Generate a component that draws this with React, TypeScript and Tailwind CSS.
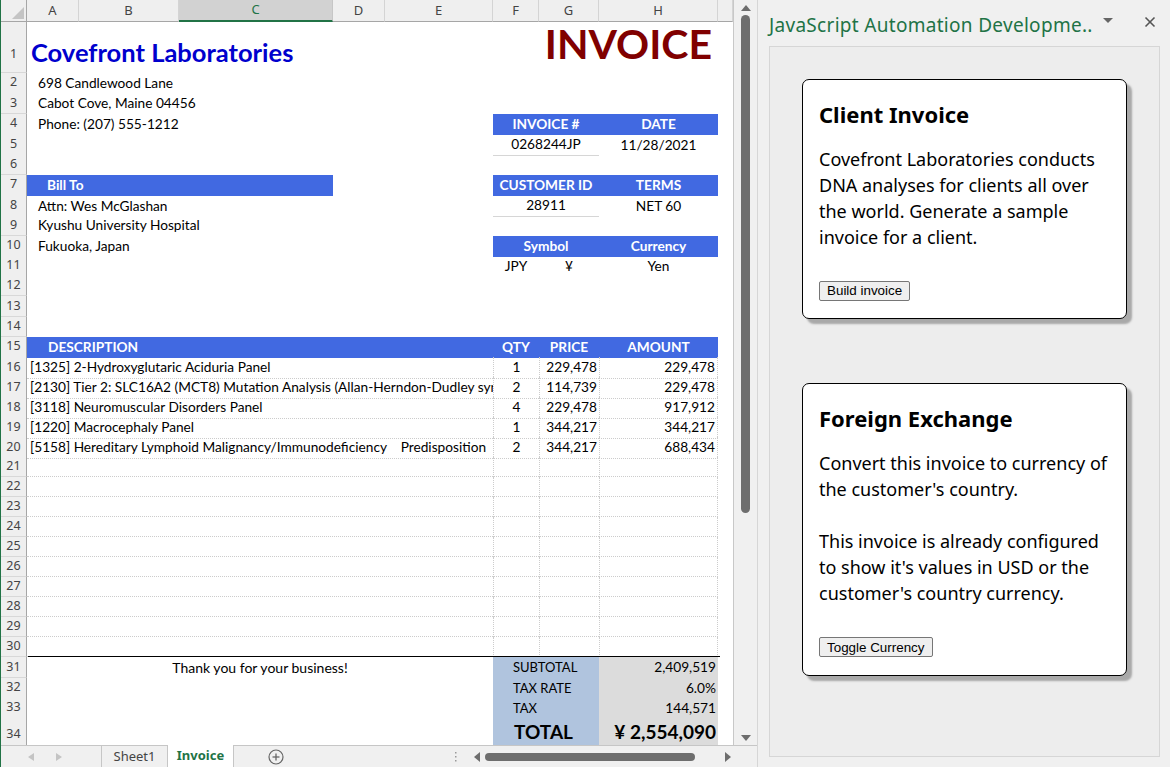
import React from "react";

const GRID =
  "grid grid-cols-[26px_52px_100px_154px_52px_108px_46px_60px_119px_15px]";
const XL = { fontFamily: "Lato, 'Noto Sans', sans-serif" } as React.CSSProperties;

function RH({ n, cls = "items-center" }: { n: number | string; cls?: string }) {
  return (
    <div
      className={`col-start-1 flex justify-center ${cls} bg-[#efefef] border-r border-[#a6a6a6] border-b border-b-[#d8d8d8] text-[12.5px] text-[#444]`}
      style={{ fontFamily: "'Noto Sans', sans-serif" }}
    >
      {n}
    </div>
  );
}

function Row({
  h,
  n,
  children,
  rhCls,
}: {
  h: string;
  n: number;
  children?: React.ReactNode;
  rhCls?: string;
}) {
  return (
    <div className={`${GRID} ${h} text-[13.7px] text-black`} style={XL}>
      <RH n={n} cls={rhCls} />
      {children}
    </div>
  );
}

const items: [string, string, string, string][] = [
  ["[1325] 2-Hydroxyglutaric Aciduria Panel", "1", "229,478", "229,478"],
  [
    "[2130] Tier 2: SLC16A2 (MCT8) Mutation Analysis (Allan-Herndon-Dudley syndrome)",
    "2",
    "114,739",
    "229,478",
  ],
  ["[3118] Neuromuscular Disorders Panel", "4", "229,478", "917,912"],
  ["[1220] Macrocephaly Panel", "1", "344,217", "344,217"],
  [
    "[5158] Hereditary Lymphoid Malignancy/Immunodeficiency    Predisposition",
    "2",
    "344,217",
    "688,434",
  ],
];

function ItemRow({ n, it }: { n: number; it?: [string, string, string, string] }) {
  const dot = "border-b border-dotted border-[#cccccc]";
  return (
    <Row h="h-[20px]" n={n}>
      <div
        className={`col-start-2 col-span-5 ${dot} flex items-center pl-[3px] overflow-hidden whitespace-pre`}
      >
        {it ? it[0] : ""}
      </div>
      <div className={`col-start-7 ${dot} border-l flex items-center justify-center`}>
        {it ? it[1] : ""}
      </div>
      <div className={`col-start-8 ${dot} border-l flex items-center justify-end pr-[2px]`}>
        {it ? it[2] : ""}
      </div>
      <div
        className={`col-start-9 ${dot} border-l border-r flex items-center justify-end pr-[2px]`}
      >
        {it ? it[3] : ""}
      </div>
    </Row>
  );
}

function ColHeader() {
  const cols = ["A", "B", "C", "D", "E", "F", "G", "H", ""];
  return (
    <div
      className={`${GRID} h-[20px] text-[13px] text-[#444]`}
      style={{ fontFamily: "'Noto Sans', sans-serif" }}
    >
      <div className="relative bg-[#efefef] border-r border-b border-[#a6a6a6]">
        <svg className="absolute right-[2px] bottom-[2px]" width="12" height="12">
          <polygon points="12,0 12,12 0,12" fill="#c4c4c4" />
        </svg>
      </div>
      {cols.map((c, i) =>
        c === "C" ? (
          <div
            key={i}
            className="bg-[#d2d2d2] border-r border-[#c6c6c6] border-b-2 border-b-[#217346] flex items-center justify-center text-[#217346]"
          >
            {c}
          </div>
        ) : (
          <div
            key={i}
            className="bg-[#efefef] border-r border-[#d4d4d4] border-b border-b-[#a6a6a6] flex items-center justify-center"
          >
            {c}
          </div>
        )
      )}
    </div>
  );
}

function Sheet() {
  const blue = "bg-[#4169e1] text-white font-bold";
  return (
    <div className="w-[733px] bg-white overflow-hidden">
      <ColHeader />
      <Row h="h-[53px]" n={1} rhCls="items-end pb-[8px]">
        <div className="col-start-2 col-span-4 flex items-end pb-[8px] pl-[4px] text-[25.5px] leading-none font-bold text-[#0000cd] whitespace-nowrap">
          Covefront Laboratories
        </div>
        <div className="col-start-7 col-span-3 flex items-end justify-end pr-[6px] pb-[9px] text-[41px] font-bold text-[#800000] leading-none">
          INVOICE
        </div>
      </Row>
      <Row h="h-[20px]" n={2}>
        <div className="col-start-2 col-span-3 flex items-center pl-[11px] whitespace-nowrap">
          698 Candlewood Lane
        </div>
      </Row>
      <Row h="h-[21px]" n={3}>
        <div className="col-start-2 col-span-3 flex items-center pl-[11px] whitespace-nowrap">
          Cabot Cove, Maine 04456
        </div>
      </Row>
      <Row h="h-[20px]" n={4}>
        <div className="col-start-2 col-span-3 flex items-center pl-[11px] whitespace-nowrap">
          Phone: (207) 555-1212
        </div>
        <div className={`col-start-7 col-span-2 ${blue} flex items-center justify-center`}>
          INVOICE #
        </div>
        <div className={`col-start-9 ${blue} flex items-center justify-center`}>DATE</div>
      </Row>
      <Row h="h-[20px]" n={5}>
        <div className="col-start-7 col-span-2 flex items-center justify-center border-b border-[#d6d6d6]">
          0268244JP
        </div>
        <div className="col-start-9 flex items-center justify-center">11/28/2021</div>
      </Row>
      <Row h="h-[21px]" n={6} />
      <Row h="h-[20px]" n={7}>
        <div className={`col-start-2 col-span-3 ${blue} flex items-center pl-[20px]`}>Bill To</div>
        <div className={`col-start-7 col-span-2 ${blue} flex items-center justify-center`}>
          CUSTOMER ID
        </div>
        <div className={`col-start-9 ${blue} flex items-center justify-center`}>TERMS</div>
      </Row>
      <Row h="h-[20px]" n={8}>
        <div className="col-start-2 col-span-3 flex items-center pl-[11px] whitespace-nowrap">
          Attn: Wes McGlashan
        </div>
        <div className="col-start-7 col-span-2 flex items-center justify-center border-b border-[#d6d6d6]">
          28911
        </div>
        <div className="col-start-9 flex items-center justify-center">NET 60</div>
      </Row>
      <Row h="h-[21px]" n={9}>
        <div className="col-start-2 col-span-3 flex items-center pl-[11px] whitespace-nowrap">
          Kyushu University Hospital
        </div>
      </Row>
      <Row h="h-[20px]" n={10}>
        <div className="col-start-2 col-span-3 flex items-center pl-[11px] whitespace-nowrap">
          Fukuoka, Japan
        </div>
        <div className={`col-start-7 col-span-2 ${blue} flex items-center justify-center`}>
          Symbol
        </div>
        <div className={`col-start-9 ${blue} flex items-center justify-center`}>Currency</div>
      </Row>
      <Row h="h-[20px]" n={11}>
        <div className="col-start-7 flex items-center justify-center">JPY</div>
        <div className="col-start-8 flex items-center justify-center">¥</div>
        <div className="col-start-9 flex items-center justify-center">Yen</div>
      </Row>
      <Row h="h-[20px]" n={12} />
      <Row h="h-[21px]" n={13} />
      <Row h="h-[20px]" n={14} />
      <Row h="h-[20px]" n={15}>
        <div className={`col-start-2 col-span-5 ${blue} flex items-center pl-[21px]`}>
          DESCRIPTION
        </div>
        <div className={`col-start-7 ${blue} flex items-center justify-center`}>QTY</div>
        <div className={`col-start-8 ${blue} flex items-center justify-center`}>PRICE</div>
        <div className={`col-start-9 ${blue} flex items-center justify-center`}>AMOUNT</div>
      </Row>
      {Array.from({ length: 15 }).map((_, i) => (
        <ItemRow key={i} n={16 + i} it={items[i]} />
      ))}
      <div className="relative">
        <div className="absolute left-[27px] top-[-1px] w-[692px] h-[1px] bg-black" />
      </div>
      <Row h="h-[21px]" n={31}>
        <div className="col-start-2 col-span-5 flex items-center justify-center text-[14px]">
          Thank you for your business!
        </div>
        <div className="col-start-7 col-span-2 bg-[#b0c4de] flex items-center pl-[20px] text-[13px]">
          SUBTOTAL
        </div>
        <div className="col-start-9 bg-[#dcdcdc] flex items-center justify-end pr-[2px]">
          2,409,519
        </div>
      </Row>
      <Row h="h-[20px]" n={32}>
        <div className="col-start-7 col-span-2 bg-[#b0c4de] flex items-center pl-[20px] text-[13px]">
          TAX RATE
        </div>
        <div className="col-start-9 bg-[#dcdcdc] flex items-center justify-end pr-[2px]">6.0%</div>
      </Row>
      <Row h="h-[20px]" n={33}>
        <div className="col-start-7 col-span-2 bg-[#b0c4de] flex items-center pl-[20px] text-[13px]">
          TAX
        </div>
        <div className="col-start-9 bg-[#dcdcdc] flex items-center justify-end pr-[2px]">
          144,571
        </div>
      </Row>
      <Row h="h-[28px]" n={34} rhCls="items-center pt-[3px]">
        <div className="col-start-7 col-span-2 bg-[#b0c4de] flex items-end pb-[2px] pl-[21px] text-[19px] font-bold">
          TOTAL
        </div>
        <div className="col-start-9 bg-[#dcdcdc] flex items-end pb-[2px] justify-end pr-[2px] text-[19px] font-bold whitespace-nowrap">
          ¥ 2,554,090
        </div>
      </Row>
    </div>
  );
}

function VScroll() {
  return (
    <div className="w-[24px] border-l border-[#c8c8c8] bg-[#f0f0f0] flex flex-col items-center">
      <svg width="10" height="8" className="mt-[4px]">
        <polygon points="5,1 10,7 0,7" fill="#6d6d6d" />
      </svg>
      <div className="mt-[3px] w-[9px] h-[498px] rounded-full bg-[#6e6e6e]" />
      <div className="flex-1" />
      <svg width="10" height="8" className="mb-[3px]">
        <polygon points="0,1 10,1 5,7" fill="#6d6d6d" />
      </svg>
    </div>
  );
}

function TabBar() {
  return (
    <div
      className="h-[22px] flex items-stretch bg-[#f0f0f0] border-t border-[#c6c6c6] text-[13px] text-[#444]"
      style={{ fontFamily: "'Noto Sans', sans-serif" }}
    >
      <div className="w-[100px] flex items-center">
        <svg width="6" height="8" className="ml-[27px]">
          <polygon points="6,0 6,8 0,4" fill="#c4c4c4" />
        </svg>
        <svg width="6" height="8" className="ml-[22px]">
          <polygon points="0,0 0,8 6,4" fill="#c4c4c4" />
        </svg>
      </div>
      <div className="w-[66px] border-l border-[#c6c6c6] flex items-center justify-center">
        Sheet1
      </div>
      <div className="w-[67px] border-l border-r border-[#c6c6c6] bg-white flex items-center justify-center font-bold text-[#217346] mt-[-1px]">
        Invoice
      </div>
      <div className="w-[84px] flex items-center justify-center">
        <svg width="16" height="16" viewBox="0 0 16 16">
          <circle cx="8" cy="8" r="7" fill="none" stroke="#666" strokeWidth="1.2" />
          <line x1="8" y1="4.5" x2="8" y2="11.5" stroke="#666" strokeWidth="1.3" />
          <line x1="4.5" y1="8" x2="11.5" y2="8" stroke="#666" strokeWidth="1.3" />
        </svg>
      </div>
      <div className="w-[127px]" />
      <div className="w-[20px] flex items-center justify-center">
        <svg width="3" height="12">
          <rect x="1" y="1" width="1.5" height="1.5" fill="#999" />
          <rect x="1" y="5" width="1.5" height="1.5" fill="#999" />
          <rect x="1" y="9" width="1.5" height="1.5" fill="#999" />
        </svg>
      </div>
      <div className="flex items-center ml-[8px]">
        <svg width="8" height="10">
          <polygon points="7,0 7,10 1,5" fill="#6d6d6d" />
        </svg>
      </div>
      <div className="flex items-center ml-[4px]">
        <div className="w-[210px] h-[8px] rounded-full bg-[#6e6e6e]" />
      </div>
      <div className="flex items-center ml-[29px]">
        <svg width="8" height="10">
          <polygon points="1,0 1,10 7,5" fill="#6d6d6d" />
        </svg>
      </div>
    </div>
  );
}

function Card({
  title,
  children,
  btn,
}: {
  title: string;
  children: React.ReactNode;
  btn: string;
}) {
  return (
    <div className="bg-white border border-black rounded-[7px] shadow-[5px_5px_2px_#a9a9a9] px-[16px] pt-[20px] pb-[17px]">
      <div className="text-[22px] font-bold leading-[28px] text-black">{title}</div>
      <div className="mt-[18px] text-[18px] leading-[26px] text-black">{children}</div>
      <button
        className="mt-[31px] h-[20px] px-[7px] bg-[#efefef] border border-[#767676] rounded-[2px] text-[13.4px] leading-none text-black"
        style={{ fontFamily: "'Liberation Sans', Arial, sans-serif" }}
      >
        {btn}
      </button>
    </div>
  );
}

function TaskPane() {
  return (
    <div
      className="flex-1 bg-[#f0f0f0] border-l border-[#d6d6d6] flex flex-col"
      style={{ fontFamily: "'Noto Sans', 'Open Sans', sans-serif" }}
    >
      <div className="h-[46px] flex items-center pl-[11px] pr-[14px] pt-[4px]">
        <div className="text-[19px] tracking-[0.3px] text-[#217346] whitespace-nowrap">
          JavaScript Automation Developme..
        </div>
        <svg width="10" height="6" className="ml-[10px] mb-[8px]">
          <polygon points="0,0 10,0 5,5" fill="#666" />
        </svg>
        <div className="flex-1" />
        <svg width="12" height="12" viewBox="0 0 12 12" className="mb-[6px]">
          <line x1="1.5" y1="1.5" x2="10.5" y2="10.5" stroke="#555" strokeWidth="1.6" />
          <line x1="10.5" y1="1.5" x2="1.5" y2="10.5" stroke="#555" strokeWidth="1.6" />
        </svg>
      </div>
      <div className="ml-[11px] mr-[10px] h-[711px] bg-[#ededed] border border-[#d6d6d6] px-[32px] pt-[32px]">
        <Card title="Client Invoice" btn="Build invoice">
          Covefront Laboratories conducts DNA analyses for clients all over the world. Generate a
          sample invoice for a client.
        </Card>
        <div className="h-[64px]" />
        <Card title="Foreign Exchange" btn="Toggle Currency">
          <div>Convert this invoice to currency of the customer's country.</div>
          <div className="h-[26px]" />
          <div>
            This invoice is already configured to show it's values in USD or the customer's
            country currency.
          </div>
        </Card>
      </div>
    </div>
  );
}

export default function App() {
  return (
    <div className="w-[1170px] h-[767px] flex overflow-hidden bg-white">
      <div className="w-[757px] flex flex-col border-l border-[#217346]">
        <div className="flex-1 flex overflow-hidden">
          <Sheet />
          <VScroll />
        </div>
        <TabBar />
      </div>
      <TaskPane />
    </div>
  );
}
